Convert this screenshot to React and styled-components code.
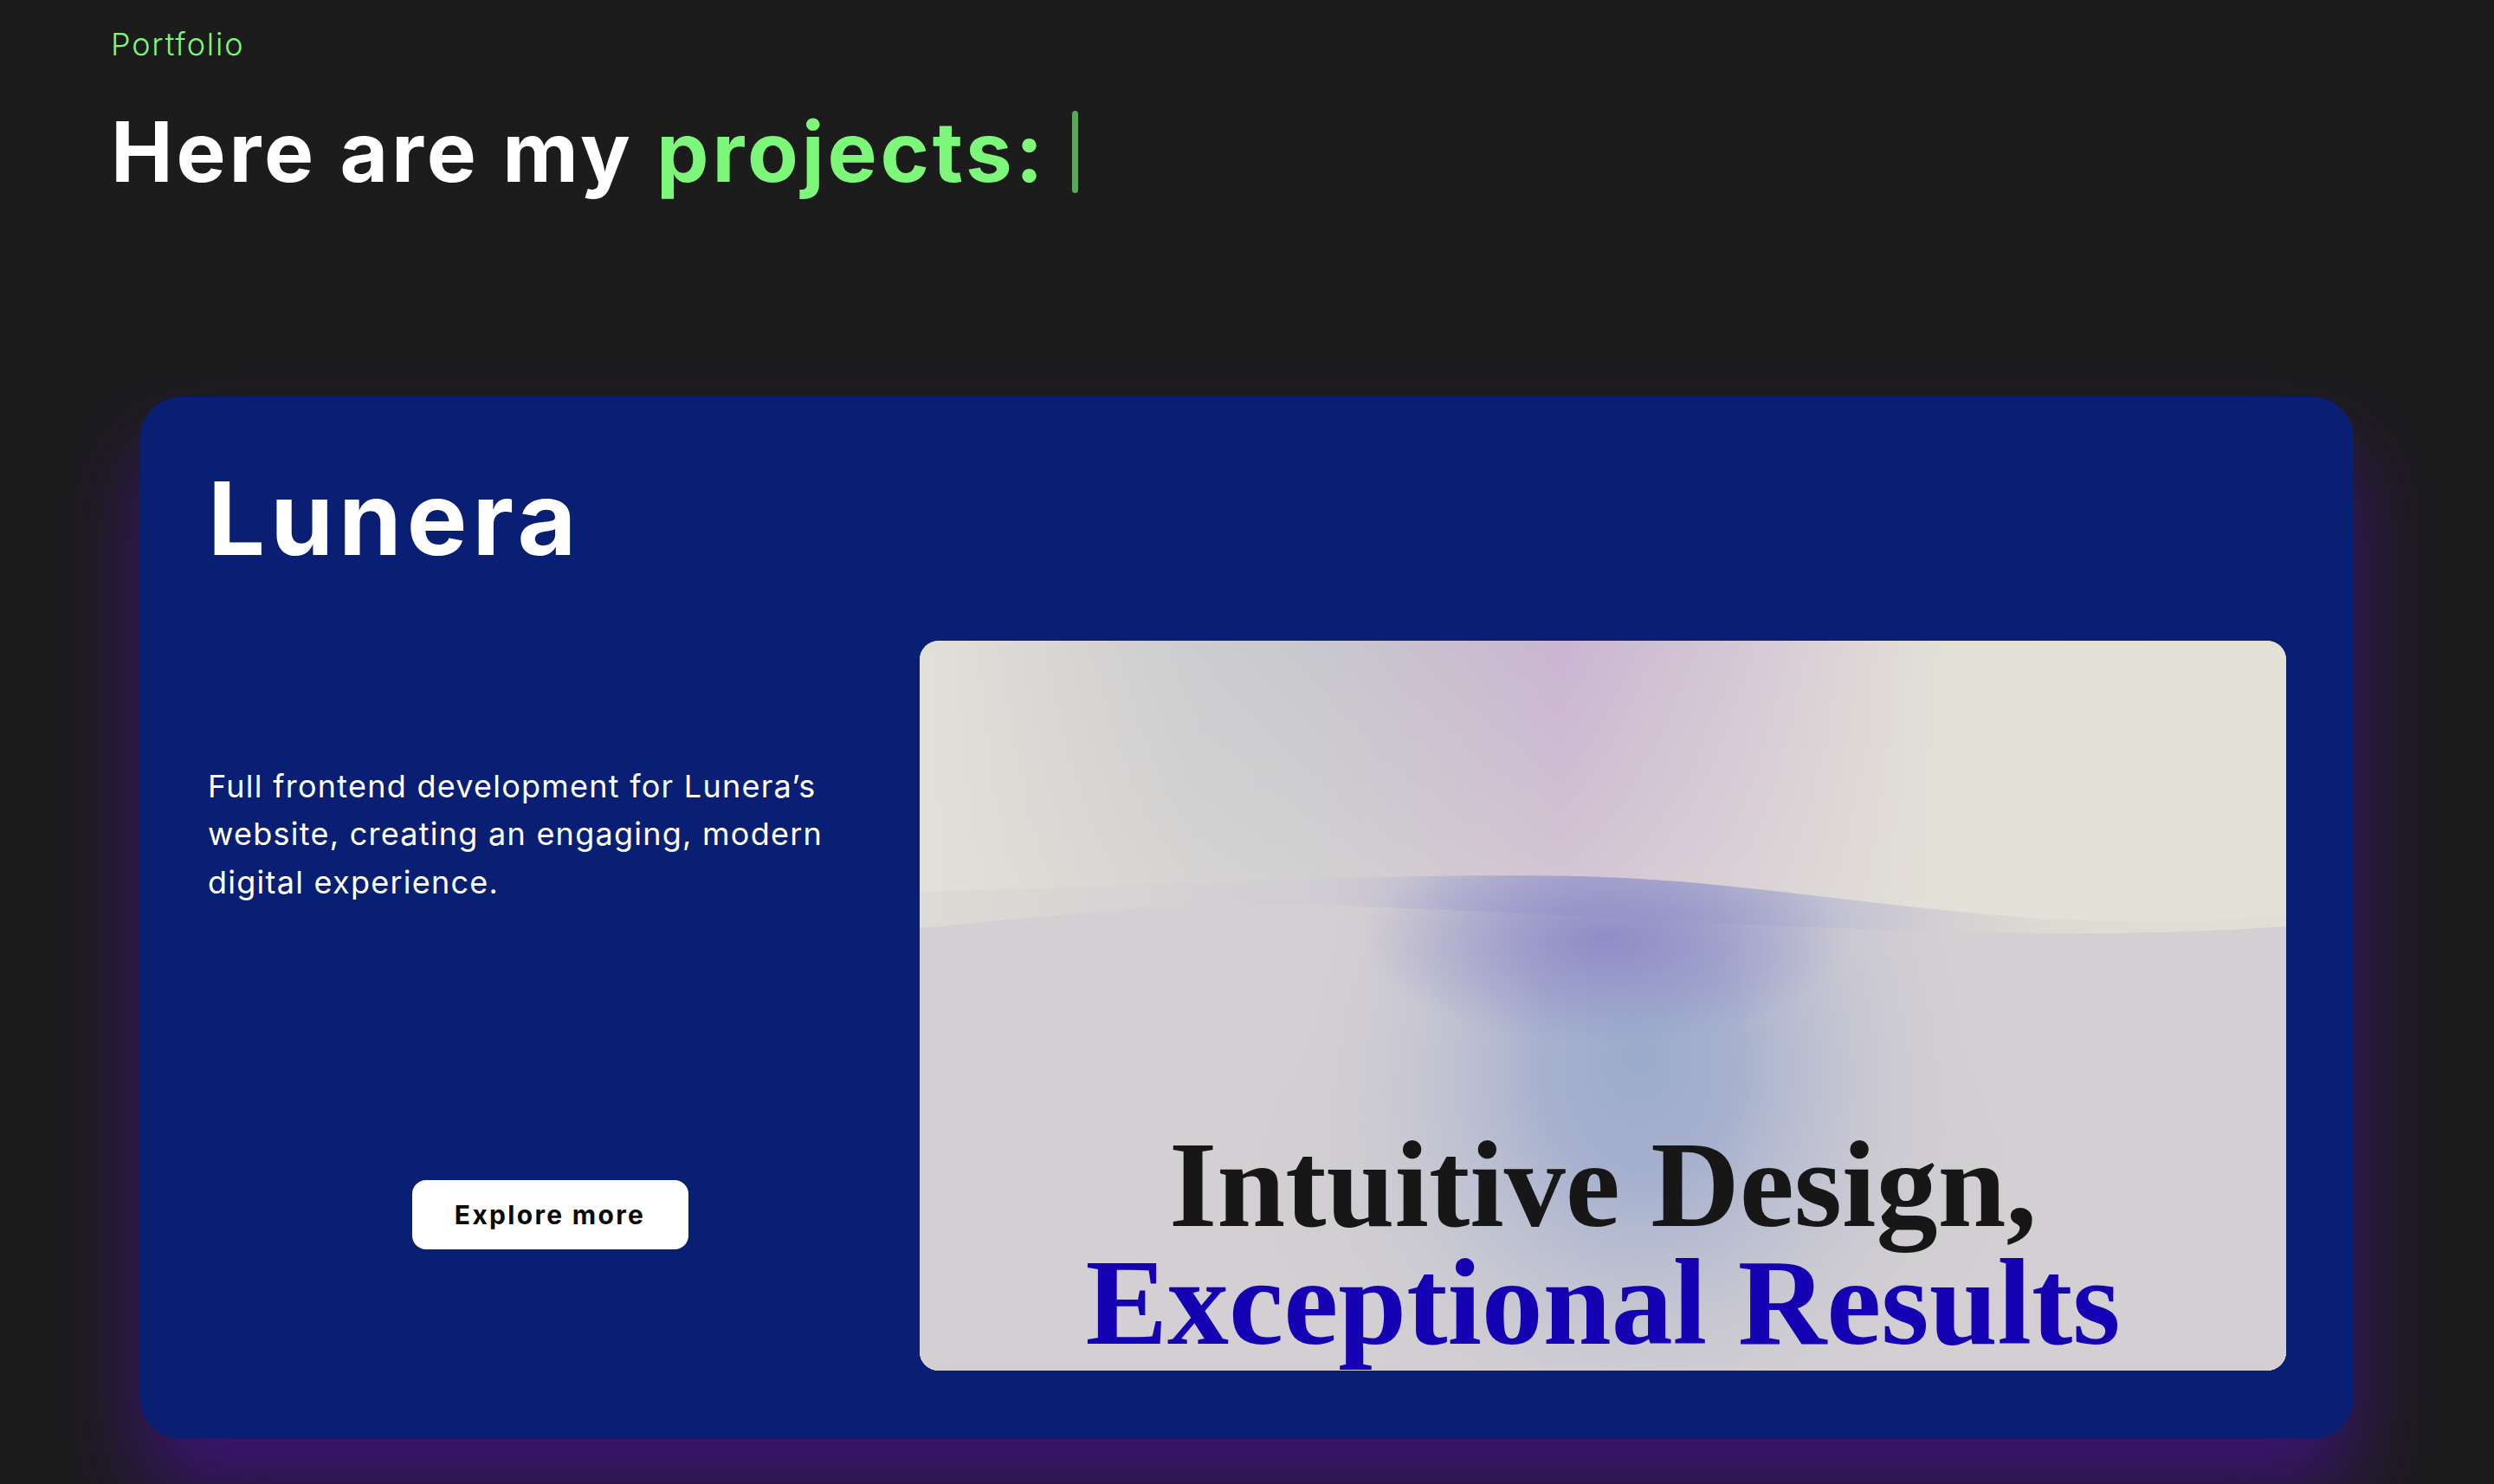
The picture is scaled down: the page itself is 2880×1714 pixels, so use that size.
import React from "react";
import styled, { createGlobalStyle } from "styled-components";

const GlobalStyle = createGlobalStyle`
  html, body {
    margin: 0;
    padding: 0;
    background: #1c1c1c;
  }
  body {
    font-family: Inter, "Open Sans", sans-serif;
    color: #ffffff;
    -webkit-font-smoothing: antialiased;
  }
  * {
    box-sizing: border-box;
  }
`;

const Page = styled.main`
  min-height: 100vh;
  padding: 30px 128px 0;
  overflow: hidden;
`;

const Eyebrow = styled.p`
  margin: 0;
  font-size: 36px;
  line-height: 1.2;
  font-weight: 300;
  letter-spacing: 1.8px;
  color: #7df77a;
`;

const Heading = styled.h1`
  display: flex;
  align-items: center;
  gap: 30px;
  margin: 45px 0 0;
  font-size: 96px;
  line-height: 1.2;
  font-weight: 700;
  letter-spacing: 3.8px;
  color: #ffffff;
`;

const Accent = styled.span`
  color: #7df77a;
`;

const Caret = styled.span`
  width: 7px;
  height: 95px;
  border-radius: 4px;
  background: #5aa85a;
`;

const Card = styled.section`
  margin: 225px 34px 0;
  padding: 71px 78px 79px;
  background: #081f74;
  border-radius: 48px;
  box-shadow: 0 60px 100px rgba(85, 15, 190, 0.55);
`;

const ProjectTitle = styled.h2`
  margin: 0;
  font-size: 117px;
  line-height: 1.2;
  font-weight: 700;
  letter-spacing: 6px;
`;

const ProjectBody = styled.div`
  display: grid;
  grid-template-columns: 790px 1fr;
  gap: 32px;
  margin-top: 70px;
`;

const Info = styled.div`
  display: flex;
  flex-direction: column;
  justify-content: space-between;
  align-items: flex-start;
  padding: 141px 0 140px;
`;

const Description = styled.p`
  margin: 0;
  max-width: 740px;
  font-size: 36px;
  line-height: 55.5px;
  font-weight: 400;
  letter-spacing: 1.25px;
`;

const ExploreButton = styled.button`
  align-self: center;
  width: 319px;
  height: 80px;
  border: 0;
  border-radius: 16px;
  background: #ffffff;
  color: #0a0a0a;
  font-family: Inter, sans-serif;
  font-size: 30px;
  font-weight: 700;
  letter-spacing: 2.3px;
  cursor: pointer;
`;

const Preview = styled.div`
  position: relative;
  height: 843px;
  border-radius: 22px;
  overflow: hidden;
  display: flex;
  flex-direction: column;
  justify-content: flex-end;
  align-items: center;
  padding-bottom: 11px;
  background: #d3cfd2;
`;

const PreviewArt = styled.svg`
  position: absolute;
  inset: 0;
  width: 100%;
  height: 100%;
`;

const PreviewHeadline = styled.h3`
  position: relative;
  margin: 0;
  font-family: "Liberation Serif", "Times New Roman", serif;
  font-weight: 700;
  font-size: 142px;
  line-height: 136px;
  text-align: center;
  white-space: nowrap;
`;

const HeadlineLine = styled.span`
  display: block;
  color: ${(p) => (p.$accent ? "#1503b3" : "#171717")};
`;

const BACK_WAVE =
  "M0,290 C250,284 500,268 760,272 C1000,278 1200,330 1460,324 C1520,322 1560,318 1578,314 L1578,843 L0,843 Z";
const FRONT_WAVE =
  "M0,332 C150,318 280,304 390,304 C700,310 1000,336 1300,338 C1420,339 1520,334 1578,330 L1578,843 L0,843 Z";

function LuneraArt() {
  return (
    <PreviewArt viewBox="0 0 1578 843" preserveAspectRatio="none">
      <defs>
        <linearGradient id="sky" x1="0" y1="0" x2="1" y2="0">
          <stop offset="0" stopColor="#e2e0d8" />
          <stop offset="0.2" stopColor="#cdcccf" />
          <stop offset="0.3" stopColor="#c8c7cd" />
          <stop offset="0.47" stopColor="#cab5d1" />
          <stop offset="0.6" stopColor="#d5c8d5" />
          <stop offset="0.74" stopColor="#e2dfd7" />
          <stop offset="1" stopColor="#e3e1d6" />
        </linearGradient>
        <linearGradient id="skyFade" x1="0" y1="0" x2="0" y2="1">
          <stop offset="0" stopColor="#e3e1d8" stopOpacity="0" />
          <stop offset="0.5" stopColor="#e3e1d8" stopOpacity="0.2" />
          <stop offset="1" stopColor="#e3e1d8" stopOpacity="0.45" />
        </linearGradient>
        <linearGradient id="backWave" x1="0" y1="0" x2="1" y2="0">
          <stop offset="0" stopColor="#dddbd5" />
          <stop offset="0.3" stopColor="#cfccd3" />
          <stop offset="0.48" stopColor="#b1aacf" />
          <stop offset="0.66" stopColor="#c6c3d2" />
          <stop offset="0.82" stopColor="#dcdad3" />
          <stop offset="1" stopColor="#e1dfd6" />
        </linearGradient>
        <radialGradient id="glow" cx="0.5" cy="0.5" r="0.5">
          <stop offset="0" stopColor="#97aacb" stopOpacity="0.95" />
          <stop offset="0.3" stopColor="#9ca9cd" stopOpacity="0.75" />
          <stop offset="0.65" stopColor="#b6bad2" stopOpacity="0.35" />
          <stop offset="1" stopColor="#d3cfd2" stopOpacity="0" />
        </radialGradient>
        <radialGradient id="haze" cx="0.5" cy="0.5" r="0.5">
          <stop offset="0" stopColor="#b4bfd0" stopOpacity="0.6" />
          <stop offset="1" stopColor="#d3cfd2" stopOpacity="0" />
        </radialGradient>
        <radialGradient id="violet" cx="0.5" cy="0.5" r="0.5">
          <stop offset="0" stopColor="#8c86c6" stopOpacity="0.85" />
          <stop offset="1" stopColor="#8c86c6" stopOpacity="0" />
        </radialGradient>
        <clipPath id="waveClip">
          <path d={BACK_WAVE} />
        </clipPath>
      </defs>
      <rect width="1578" height="843" fill="url(#sky)" />
      <rect width="1578" height="340" fill="url(#skyFade)" />
      <path d={BACK_WAVE} fill="url(#backWave)" />
      <path d={FRONT_WAVE} fill="#d3cfd2" />
      <g clipPath="url(#waveClip)">
        <ellipse cx="820" cy="620" rx="520" ry="330" fill="url(#haze)" />
        <ellipse cx="830" cy="480" rx="400" ry="470" fill="url(#glow)" />
        <ellipse cx="790" cy="345" rx="280" ry="120" fill="url(#violet)" />
      </g>
    </PreviewArt>
  );
}

export default function App() {
  return (
    <>
      <GlobalStyle />
      <Page>
        <Eyebrow>Portfolio</Eyebrow>
        <Heading>
          <span>
            Here are my <Accent>projects:</Accent>
          </span>
          <Caret />
        </Heading>

        <Card>
          <ProjectTitle>Lunera</ProjectTitle>
          <ProjectBody>
            <Info>
              <Description>
                Full frontend development for Lunera’s website, creating an
                engaging, modern digital experience.
              </Description>
              <ExploreButton>Explore more</ExploreButton>
            </Info>
            <Preview>
              <LuneraArt />
              <PreviewHeadline>
                <HeadlineLine>Intuitive Design,</HeadlineLine>
                <HeadlineLine $accent>Exceptional Results</HeadlineLine>
              </PreviewHeadline>
            </Preview>
          </ProjectBody>
        </Card>
      </Page>
    </>
  );
}
